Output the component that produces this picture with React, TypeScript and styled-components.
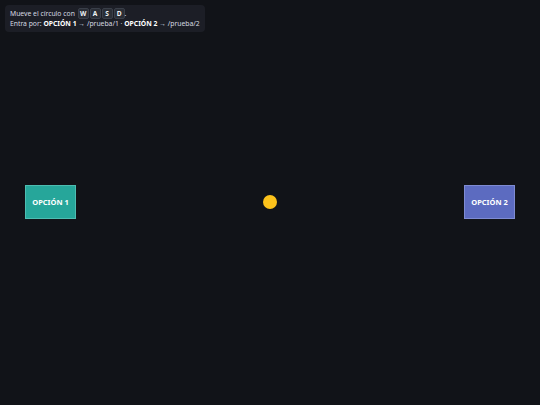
import { createGlobalStyle } from "styled-components";
import styled from "styled-components";

const GlobalStyle = createGlobalStyle`
  html, body {
    margin: 0;
    padding: 0;
    background: #111318;
    font-family: "Noto Sans", "Open Sans", sans-serif;
  }
`;

const Stage = styled.div`
  position: relative;
  width: 540px;
  height: 405px;
  overflow: hidden;
  background: #111318;
`;

const Hud = styled.div`
  position: absolute;
  left: 5px;
  top: 5px;
  padding: 3px 5px 3px 5px;
  border-radius: 4px;
  background: rgba(30, 33, 41, 0.85);
  color: #d7dbe2;
  font-size: 6.8px;
  line-height: 10px;
`;

const Line = styled.div`
  display: flex;
  align-items: center;
  white-space: pre;
`;

const Key = styled.span`
  display: inline-flex;
  align-items: center;
  justify-content: center;
  width: 9px;
  height: 9px;
  margin-left: 1px;
  border: 1px solid #3a3f49;
  border-radius: 2px;
  background: #2a2e36;
  color: #f0f2f5;
  font-weight: 700;
  font-size: 6.6px;
`;

const Strong = styled.b`
  font-weight: 700;
  color: #ffffff;
`;

const Door = styled.div<{ $x: number; $bg: string; $edge: string }>`
  position: absolute;
  left: ${(p) => p.$x}px;
  top: 185px;
  width: 51px;
  height: 34px;
  box-sizing: border-box;
  display: flex;
  align-items: center;
  justify-content: center;
  background: ${(p) => p.$bg};
  border: 1px solid ${(p) => p.$edge};
  color: #ffffff;
  font-weight: 700;
  font-size: 7.5px;
`;

const Ball = styled.div`
  position: absolute;
  left: 263px;
  top: 195px;
  width: 14px;
  height: 14px;
  border-radius: 50%;
  background: #fcc21b;
`;

export default function App() {
  return (
    <>
      <GlobalStyle />
      <Stage>
        <Hud>
          <Line>
            Mueve el círculo con <Key>W</Key>
            <Key>A</Key>
            <Key>S</Key>
            <Key>D</Key>.
          </Line>
          <Line>
            Entra por: <Strong>OPCIÓN 1</Strong> → /prueba/1 · <Strong>OPCIÓN 2</Strong> → /prueba/2
          </Line>
        </Hud>
        <Door $x={25} $bg="#26a69a" $edge="#4dbdb1">
          OPCIÓN 1
        </Door>
        <Door $x={464} $bg="#5c6bc0" $edge="#7e8bd2">
          OPCIÓN 2
        </Door>
        <Ball />
      </Stage>
    </>
  );
}
